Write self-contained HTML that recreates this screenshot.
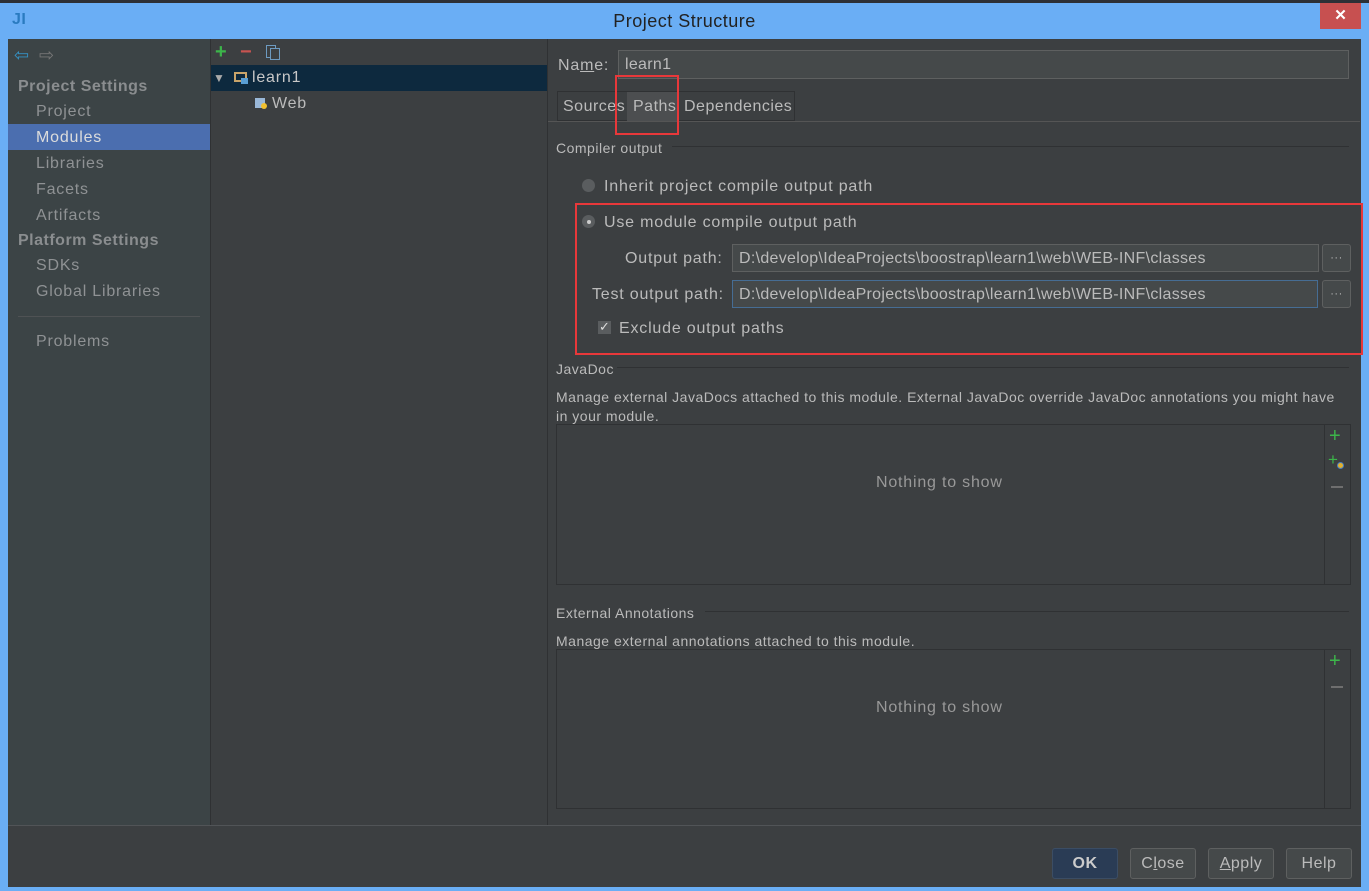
<!DOCTYPE html>
<html><head><meta charset="utf-8"><style>
*{margin:0;padding:0;box-sizing:border-box}
body{width:1369px;height:891px;background:#6aaef5;position:relative;overflow:hidden;font-family:"Liberation Sans",sans-serif;font-size:15px;color:#bbbbbb}
.a{position:absolute}
.t{position:absolute;white-space:nowrap;letter-spacing:0.5px;margin-top:1px}
.l{letter-spacing:0.8px}
.inp{position:absolute;background:#45494a;border:1px solid #5e6060;color:#bbb;padding-left:6px;line-height:28px;letter-spacing:0.3px}
.btn{position:absolute;border:1px solid #5e6060;background:#45494a;border-radius:3px;color:#bbb;text-align:center;font-size:16px;line-height:30px;letter-spacing:0.5px}
.sep{position:absolute;height:1px;background:#4f5254}
</style></head><body>
<div class="a" style="left:0;top:0;width:1369px;height:3px;background:#2d3036"></div>
<div class="t" style="left:12px;top:10px;color:#2a7bc0;font-weight:bold;font-size:16px">JI</div>
<div class="t" style="left:0;width:1369px;text-align:center;top:10px;font-size:18px;color:#222">Project Structure</div>
<div class="a" style="left:1320px;top:3px;width:41px;height:26px;background:#c75050;color:#fff;text-align:center;font-weight:bold;font-size:15px;line-height:26px">✕</div>
<div class="a" style="left:8px;top:39px;width:1353px;height:848px;background:#3c3f41"></div>
<!-- sidebar -->
<div class="a" style="left:8px;top:39px;width:202px;height:786px;background:#3c4446"></div>
<div class="t" style="left:14px;top:44px;color:#3592c4;font-size:18px">⇦</div>
<div class="t" style="left:39px;top:44px;color:#777;font-size:18px">⇨</div>
<div class="t" style="left:18px;top:77px;font-weight:bold;font-size:16px;color:#8a8d8f">Project Settings</div>
<div class="t l" style="left:36px;top:102px;font-size:16px;color:#8f9294">Project</div>
<div class="a" style="left:8px;top:124px;width:202px;height:26px;background:#4b6eaf"></div>
<div class="t l" style="left:36px;top:128px;font-size:16px;color:#dcdcdc">Modules</div>
<div class="t l" style="left:36px;top:154px;font-size:16px;color:#8f9294">Libraries</div>
<div class="t l" style="left:36px;top:180px;font-size:16px;color:#8f9294">Facets</div>
<div class="t l" style="left:36px;top:206px;font-size:16px;color:#8f9294">Artifacts</div>
<div class="t" style="left:18px;top:231px;font-weight:bold;font-size:16px;color:#8a8d8f">Platform Settings</div>
<div class="t l" style="left:36px;top:256px;font-size:16px;color:#8f9294">SDKs</div>
<div class="t l" style="left:36px;top:282px;font-size:16px;color:#8f9294">Global Libraries</div>
<div class="sep" style="left:18px;top:316px;width:182px"></div>
<div class="t l" style="left:36px;top:332px;font-size:16px;color:#8f9294">Problems</div>
<div class="a" style="left:210px;top:39px;width:1px;height:786px;background:#2f3133"></div>
<!-- tree -->
<div class="t" style="left:215px;top:40px;color:#3cb54a;font-size:20px;font-weight:bold">+</div>
<div class="t" style="left:240px;top:40px;color:#c75450;font-size:20px;font-weight:bold">−</div>
<div class="a" style="left:266px;top:45px;width:10px;height:13px;border:1px solid #6d9ac0;background:#3c3f41"></div>
<div class="a" style="left:270px;top:48px;width:10px;height:12px;border:1px solid #6d9ac0;background:#3c3f41"></div>
<div class="a" style="left:211px;top:65px;width:336px;height:26px;background:#0d293e"></div>
<div class="t" style="left:213px;top:70px;font-size:12px;color:#aaa">▼</div>
<div class="a" style="left:234px;top:72px;width:13px;height:10px;border:2px solid #c9a46a"></div>
<div class="a" style="left:241px;top:78px;width:7px;height:6px;background:#5a9fd4"></div>
<div class="t l" style="left:252px;top:68px;font-size:16px;color:#c8c8c8">learn1</div>
<div class="a" style="left:255px;top:98px;width:10px;height:10px;background:#9ab8d8"></div>
<div class="a" style="left:261px;top:103px;width:6px;height:6px;border-radius:50%;background:#f0c030"></div>
<div class="t l" style="left:272px;top:94px;font-size:16px;color:#bbb">Web</div>
<div class="a" style="left:547px;top:39px;width:1px;height:786px;background:#2f3133"></div>
<!-- right -->
<div class="t l" style="left:558px;top:56px;font-size:16px">Na<u>m</u>e:</div>
<div class="inp" style="left:618px;top:50px;width:731px;height:29px;font-size:16px">learn1</div>
<div class="a" style="left:557px;top:91px;width:238px;height:30px;border:1px solid #2f3133;background:#3c3f41"></div>
<div class="a" style="left:627px;top:92px;width:51px;height:29px;background:#4c4e50"></div>
<div class="t" style="left:563px;top:97px;font-size:16px">Sources</div>
<div class="t" style="left:633px;top:97px;font-size:16px">Paths</div>
<div class="t" style="left:684px;top:97px;font-size:16px">Dependencies</div>
<div class="sep" style="left:548px;top:121px;width:812px;background:#555"></div>
<div class="a" style="left:615px;top:75px;width:64px;height:60px;border:2px solid #e8383a"></div>
<div class="t" style="left:556px;top:139px;font-size:14px">Compiler output</div>
<div class="a" style="left:672px;top:146px;width:677px;height:1px;background:#2f3133"></div>
<div class="a" style="left:582px;top:179px;width:13px;height:13px;border-radius:50%;background:#5a5d5f"></div>
<div class="t l" style="left:604px;top:177px;font-size:16px">Inherit project compile output path</div>
<div class="a" style="left:582px;top:215px;width:13px;height:13px;border-radius:50%;background:#5a5d5f"></div>
<div class="a" style="left:587px;top:220px;width:4px;height:4px;border-radius:50%;background:#ccc"></div>
<div class="t l" style="left:604px;top:213px;font-size:16px">Use module compile output path</div>
<div class="t l" style="left:625px;top:249px;font-size:16px">Output path:</div>
<div class="inp" style="left:732px;top:244px;width:587px;height:28px;font-size:16px">D:\develop\IdeaProjects\boostrap\learn1\web\WEB-INF\classes</div>
<div class="btn" style="left:1322px;top:244px;width:29px;height:28px;font-size:11px;line-height:26px">···</div>
<div class="t l" style="left:592px;top:285px;font-size:16px">Test output path:</div>
<div class="inp" style="left:732px;top:280px;width:586px;height:28px;font-size:16px;border-color:#466d94">D:\develop\IdeaProjects\boostrap\learn1\web\WEB-INF\classes</div>
<div class="btn" style="left:1322px;top:280px;width:29px;height:28px;font-size:11px;line-height:26px">···</div>
<div class="a" style="left:598px;top:321px;width:13px;height:13px;background:#5a5d5f;color:#ddd;font-size:13px;line-height:12px;text-align:center">✓</div>
<div class="t l" style="left:619px;top:319px;font-size:16px">Exclude output paths</div>
<div class="a" style="left:575px;top:203px;width:788px;height:152px;border:2px solid #e8383a"></div>
<div class="t" style="left:556px;top:360px;font-size:14px">JavaDoc</div>
<div class="a" style="left:617px;top:367px;width:732px;height:1px;background:#2f3133"></div>
<div class="t" style="left:556px;top:388px;font-size:14px">Manage external JavaDocs attached to this module. External JavaDoc override JavaDoc annotations you might have</div>
<div class="t" style="left:556px;top:407px;font-size:14px">in your module.</div>
<div class="a" style="left:556px;top:424px;width:795px;height:161px;border:1px solid #2f3133"></div>
<div class="a" style="left:1324px;top:424px;width:1px;height:161px;background:#2f3133"></div>
<div class="t l" style="left:876px;top:473px;font-size:16px;color:#999">Nothing to show</div>
<div class="t" style="left:1329px;top:424px;color:#3cb54a;font-size:20px">+</div>
<div class="t" style="left:1328px;top:449px;color:#3cb54a;font-size:17px">+</div>
<div class="a" style="left:1337px;top:462px;width:7px;height:7px;border-radius:50%;background:#e0b030;border:1px solid #4a80c0"></div>
<div class="a" style="left:1331px;top:486px;width:12px;height:2px;background:#6e6e6e"></div>
<div class="t" style="left:556px;top:604px;font-size:14px">External Annotations</div>
<div class="a" style="left:705px;top:611px;width:644px;height:1px;background:#2f3133"></div>
<div class="t" style="left:556px;top:632px;font-size:14px">Manage external annotations attached to this module.</div>
<div class="a" style="left:556px;top:649px;width:795px;height:160px;border:1px solid #2f3133"></div>
<div class="a" style="left:1324px;top:649px;width:1px;height:160px;background:#2f3133"></div>
<div class="t l" style="left:876px;top:698px;font-size:16px;color:#999">Nothing to show</div>
<div class="t" style="left:1329px;top:649px;color:#3cb54a;font-size:20px">+</div>
<div class="a" style="left:1331px;top:686px;width:12px;height:2px;background:#6e6e6e"></div>
<div class="sep" style="left:8px;top:825px;width:1353px;background:#515457"></div>
<!-- buttons -->
<div class="btn" style="left:1052px;top:848px;width:66px;height:31px;background:#2a3c55;border-color:#3b4d64;color:#ccc;font-weight:bold">OK</div>
<div class="btn" style="left:1130px;top:848px;width:66px;height:31px">C<u>l</u>ose</div>
<div class="btn" style="left:1208px;top:848px;width:66px;height:31px"><u>A</u>pply</div>
<div class="btn" style="left:1286px;top:848px;width:66px;height:31px">Help</div>
</body></html>
